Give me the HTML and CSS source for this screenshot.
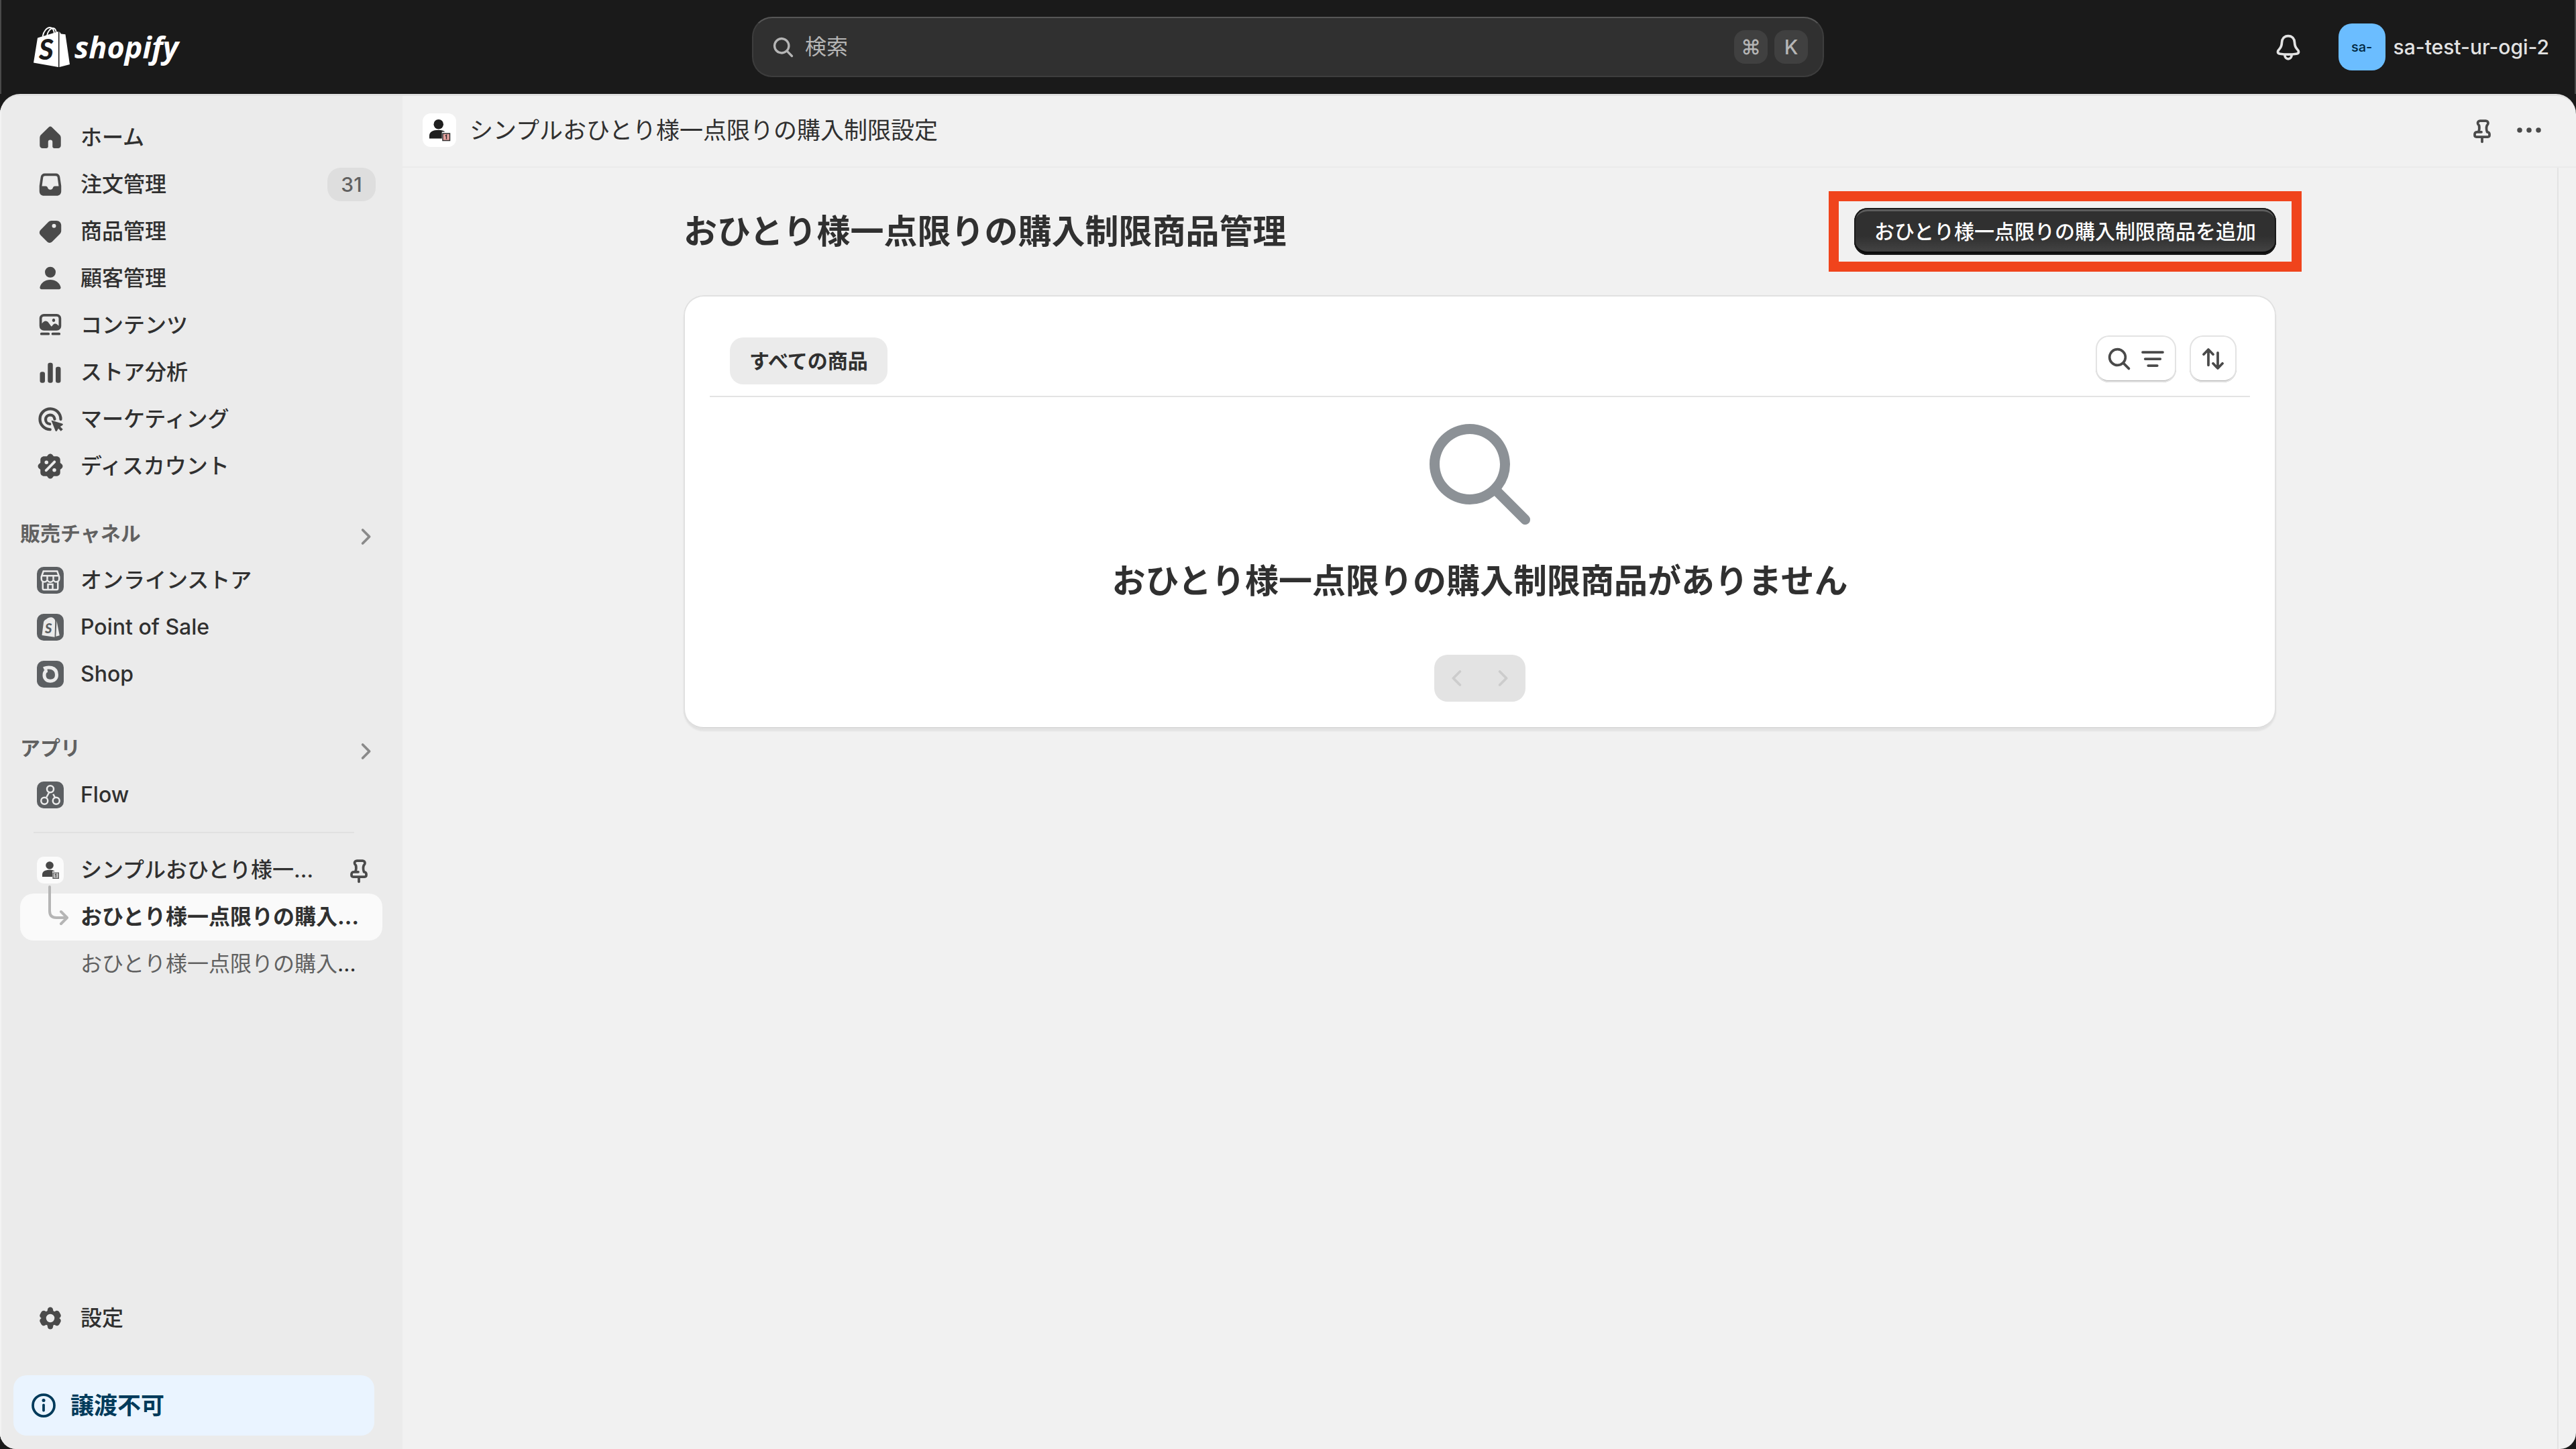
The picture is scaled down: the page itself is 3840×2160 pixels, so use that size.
FILE: index.html
```html
<!DOCTYPE html>
<html lang="ja">
<head>
<meta charset="utf-8">
<meta name="viewport" content="width=device-width, initial-scale=1">
<title>シンプルおひとり様一点限りの購入制限設定</title>
<link rel="stylesheet" href="styles.css">
</head>
<body>
<svg class="sprite" aria-hidden="true">
  <symbol id="i-search" viewBox="0 0 20 20"><path fill-rule="evenodd" d="M12.323 13.383a5.5 5.5 0 1 1 1.06-1.06l2.897 2.897a.75.75 0 1 1-1.06 1.06l-2.897-2.897Zm.677-4.383a4 4 0 1 1-8 0 4 4 0 0 1 8 0Z"/></symbol>
  <symbol id="i-chevron" viewBox="0 0 20 20"><path d="M7.72 14.53a.75.75 0 0 1 0-1.06l3.47-3.47-3.47-3.47a.75.75 0 0 1 1.06-1.06l4 4a.75.75 0 0 1 0 1.06l-4 4a.75.75 0 0 1-1.06 0Z"/></symbol>
  <symbol id="i-pin" viewBox="0 0 20 20"><g fill="none" stroke="currentColor" stroke-width="1.5" stroke-linecap="round" stroke-linejoin="round"><path d="M9.6 11.1H7c-.8 0-1.4.6-1.4 1.3v.6c0 .6.4 1 1 1h6.800c.6 0 1-.4 1-1v-.6c0-.7-.6-1.300-1.400-1.300-.5-1.500-.5-2.900-.1-3.900.5-.4.7-.8.7-1.400 0-.8-.6-1.400-1.400-1.400H8.800c-.8 0-1.400.6-1.400 1.400 0 .6.300 1 .800 1.400.3 1.200.2 2.400-.3 3.900"/><path d="M10 14.300v2.600"/></g></symbol>
  <symbol id="i-app" viewBox="0 0 20 20"><circle class="app-ink" cx="9.500" cy="6.500" r="2.900"/><path class="app-ink" d="M4 15v-1.500C4 11 6 9.900 9.500 9.900c1.700 0 3 .3 3.900 1.100h-1.900v4Z"/><path class="app-card" d="M12 12h4.200v4.200H12Z"/><path class="app-one" d="m13.500 13.500.7-.5v2.400"/></symbol>
</svg>

<header class="topbar">
  <a class="brand" href="#" aria-label="shopify">
    <svg class="brand-bag" viewBox="0 0 54 60" aria-hidden="true">
      <path fill="#fff" d="M6 16.500 37 7v53L0 53.500ZM38.500 7l2.500 3.500 6.500.8L54 56l-15.500 4Z"/>
      <path fill="none" stroke="#fff" stroke-width="1.800" d="M13.500 14.500C15 6 20 1 24.500 1c4 0 6 4.500 6.500 9.500M20 13c1.500-7 5.500-11 9-11 3 0 4.500 3 5 7"/>
      <text class="bag-s" x="19" y="49" text-anchor="middle">S</text>
    </svg>
    <span class="brand-name">shopify</span>
  </a>
  <label class="search">
    <svg class="icon search-icon" aria-hidden="true"><use href="#i-search"/></svg>
    <input type="search" placeholder="検索" aria-label="検索">
    <kbd>⌘</kbd><kbd>K</kbd>
  </label>
  <div class="account">
    <button class="icon-btn bell" type="button" aria-label="通知">
      <svg class="icon" viewBox="0 0 20 20" aria-hidden="true"><g fill="none" stroke="currentColor" stroke-width="1.500" stroke-linejoin="round"><path d="M10 3.400c-2.300 0-3.700 1.700-3.800 3.900-.1 2-.5 3-1.500 4-.5.500-.9 1-.9 1.600 0 .7.500 1.100 1.300 1.200 3.200.5 6.600.5 9.800 0 .8-.1 1.300-.5 1.300-1.200 0-.6-.4-1.100-.9-1.600-1-1-1.400-2-1.500-4-.1-2.200-1.500-3.900-3.800-3.900Z"/><path d="M8 14.500v.6a2 2 0 0 0 4 0v-.6"/></g></svg>
    </button>
    <button class="store" type="button"><span class="avatar">sa-</span>sa-test-ur-ogi-2</button>
  </div>
</header>

<div class="frame">
  <nav class="sidebar" aria-label="メイン">
    <ul class="list">
      <li><a class="item" href="#"><svg class="icon" viewBox="0 0 20 20"><path d="M11 3.900a1.400 1.400 0 0 0-2 0L4.300 8.500C3.900 9 3.700 9.600 3.700 10.300v4.400c0 1 .7 1.700 1.700 1.700h2.200c.6 0 1.100-.4 1.100-1v-2.700a1.300 1.300 0 0 1 2.600 0v2.700c0 .6.500 1 1.100 1h2.200c1 0 1.700-.7 1.700-1.700v-4.400c0-.7-.2-1.300-.6-1.800Z"/></svg><span>ホーム</span></a></li>
      <li><a class="item" href="#"><svg class="icon" viewBox="0 0 20 20"><path fill-rule="evenodd" d="M6.700 3.400h6.600c1.300 0 2.200.8 2.400 2l.8 5.400v3.200c0 1.700-1.100 2.700-2.700 2.700H6.200c-1.600 0-2.700-1-2.700-2.700v-3.200l.8-5.400c.2-1.200 1.100-2 2.400-2Zm.2 1.500c-.7 0-1.100.3-1.200 1L5 11h2.300c.5 0 .9.300 1.100.8.200.9.900 1.300 1.600 1.300s1.400-.4 1.600-1.300c.2-.5.6-.8 1.100-.8H15l-.7-5.100c-.1-.7-.5-1-1.200-1Z"/></svg><span>注文管理</span><span class="badge">31</span></a></li>
      <li><a class="item" href="#"><svg class="icon" viewBox="0 0 20 20"><path fill-rule="evenodd" d="M10.700 3.600h3c1.600 0 2.800 1.200 2.800 2.800v3.200c0 .7-.3 1.400-.8 1.900l-4.600 4.600c-.9.900-2.200.9-3 0L4.200 12.200c-.9-.9-.9-2.200 0-3.100l4.600-4.700c.5-.5 1.200-.8 1.900-.8Zm1.500 4.300a1.200 1.200 0 1 0 0-2.400 1.200 1.200 0 0 0 0 2.400Z"/></svg><span>商品管理</span></a></li>
      <li><a class="item" href="#"><svg class="icon" viewBox="0 0 20 20"><circle cx="10" cy="6.300" r="3.200"/><path d="M3.800 15.200C4.400 12.600 7 10.800 10 10.800s5.600 1.800 6.200 4.400c.2.700-.3 1.300-1 1.300H4.800c-.7 0-1.200-.6-1-1.300Z"/></svg><span>顧客管理</span></a></li>
      <li><a class="item" href="#"><svg class="icon" viewBox="0 0 20 20"><path fill-rule="evenodd" d="M6.200 3.200h7.600c1.500 0 2.700 1.200 2.700 2.700v4.500c0 1.500-1.200 2.700-2.700 2.700H6.200a2.700 2.700 0 0 1-2.700-2.700V5.900c0-1.500 1.200-2.700 2.700-2.700Zm0 1.500C5.500 4.700 5 5.200 5 5.900v3c.7-.9 1.500-1.500 2.200-1.500.8 0 1.300.4 1.800 1.100l1.400 1.900c.2.300.4.300.6 0l.6-.7c.6-.8 1.800-.9 2.500-.2l.9.800V5.900c0-.7-.5-1.200-1.200-1.200Zm5.500 3.200a.9 1 0 1 0 0-1.900.9 1 0 0 0 0 1.900ZM4.700 14.300h4.200a.75.75 0 0 1 0 1.500H4.700a.75.75 0 0 1 0-1.500Zm6.700 0h3.900a.75.75 0 0 1 0 1.500h-3.900a.75.75 0 0 1 0-1.500Z"/></svg><span>コンテンツ</span></a></li>
      <li><a class="item" href="#"><svg class="icon" viewBox="0 0 20 20"><rect x="3.800" y="9.700" width="3" height="6.600" rx="1.300"/><rect x="8.500" y="4.300" width="3" height="12" rx="1.300"/><rect x="13.200" y="6.700" width="3" height="9.600" rx="1.300"/></svg><span>ストア分析</span></a></li>
      <li><a class="item" href="#"><svg class="icon" viewBox="0 0 20 20"><g fill="none" stroke="currentColor" stroke-width="1.700" stroke-linecap="round"><path d="M9.900 16.100A6.200 6.200 0 1 1 16.200 10"/><path d="M9.700 12.800A2.700 2.700 0 1 1 12.600 9.900"/></g><path d="m10.900 10.700 6.200 1.900c.6.200.6.700.1 1l-1.300.8 1.600 1.600-1.200 1.100-1.500-1.600-.8 1.400c-.3.500-.8.400-1-.1l-2.300-5.800c-.1-.3 0-.4.200-.3Z"/></svg><span>マーケティング</span></a></li>
      <li><a class="item" href="#"><svg class="icon" viewBox="0 0 20 20"><path fill-rule="evenodd" d="M8.700 3.200c.7-.8 1.900-.8 2.600 0l.7.900h1.700c1.300 0 2.200.9 2.200 2.200v1.700l.9.700c.8.700.8 1.900 0 2.600l-.9.700v1.700c0 1.300-.9 2.200-2.200 2.200H12l-.7.900c-.7.800-1.900.8-2.600 0l-.7-.9H6.300c-1.300 0-2.200-.9-2.200-2.200V12l-.9-.7c-.8-.7-.8-1.900 0-2.600l.9-.7V6.300c0-1.300.9-2.200 2.200-2.200H8ZM7.700 8.800a1.100 1.100 0 1 0 0-2.200 1.100 1.100 0 0 0 0 2.200Zm4.700 4.600a1.100 1.100 0 1 0 0-2.200 1.100 1.100 0 0 0 0 2.200ZM13.100 7.900 8 13.100c-.7.600-1.700-.4-1.100-1.100L12 6.800c.7-.6 1.700.4 1.100 1.100Z"/></svg><span>ディスカウント</span></a></li>
    </ul>

    <section>
      <a class="section-head" href="#"><span>販売チャネル</span><svg class="icon"><use href="#i-chevron"/></svg></a>
      <ul class="list">
        <li><a class="item" href="#"><svg class="icon tile" viewBox="0 0 16 16"><rect width="16" height="16" rx="4"/><g class="tile-line"><path d="M3.900 2.600h8.200l1.200 3.300v1.200a1.700 1.700 0 0 1-3.500.2 1.800 1.800 0 0 1-3.600 0 1.700 1.700 0 0 1-3.500-.2V5.900ZM2.900 5.300h10.200M6.200 5.500v1.700M9.800 5.500v1.700M3.500 8.800v4.100c0 .4.300.7.700.7h7.600c.4 0 .7-.3.700-.7V8.800M6.600 13.400v-3h2.800v3"/></g></svg><span>オンラインストア</span></a></li>
        <li><a class="item" href="#"><svg class="icon tile" viewBox="0 0 16 16"><rect width="16" height="16" rx="4"/><path class="tile-fill" d="M4 5c.2-.9.700-1.300 1.500-1.700C6.600 2.300 8 1.800 9.200 2.200c1 .4 1.700 1.200 1.700 2.300l-.3 9.400-7.600-1.100ZM11.800 4.200l1.700 8.700-2.200.6Z"/><text class="tile-s" x="6.900" y="11.700" text-anchor="middle">S</text></svg><span>Point of Sale</span></a></li>
        <li><a class="item" href="#"><svg class="icon tile" viewBox="0 0 16 16"><rect width="16" height="16" rx="4"/><path class="tile-shop" d="M4 4.600C5.800 3.900 7.400 3.800 8.800 4.200c2 .6 3 2.200 3 4.200 0 2.300-1.600 3.700-3.800 3.700s-3.600-1.500-3.600-3.500c0-1.500.7-2.600 1.900-2.800"/></svg><span>Shop</span></a></li>
      </ul>
    </section>

    <section class="apps">
      <a class="section-head" href="#"><span>アプリ</span><svg class="icon"><use href="#i-chevron"/></svg></a>
      <ul class="list">
        <li><a class="item" href="#"><svg class="icon tile" viewBox="0 0 16 16"><rect width="16" height="16" rx="4"/><g class="tile-line"><circle cx="8" cy="4.500" r="2"/><circle cx="4.500" cy="11.500" r="2"/><circle cx="11.500" cy="11.500" r="2"/><path d="M7.300 6.500 5.700 9.400M9.700 7.500l1 1.900"/></g></svg><span>Flow</span></a></li>
      </ul>
      <hr class="rule">
      <ul class="list">
        <li><a class="item" href="#"><svg class="icon tile app muted"><use href="#i-app"/></svg><span class="clip">シンプルおひとり様一点限りの購入制限設定</span><svg class="icon pin"><use href="#i-pin"/></svg></a></li>
        <li><a class="item current" href="#" aria-current="page"><svg class="branch" viewBox="0 0 32 60"><path d="M4 2v36q0 10 10 10h14M21 39l9 9-9 9"/></svg><span class="clip">おひとり様一点限りの購入制限商品管理</span></a></li>
        <li><a class="item sub" href="#"><span class="clip"><span class="dim">おひとり様一点限りの購入制限設定</span></span></a></li>
      </ul>
    </section>

    <div class="side-foot">
      <a class="item" href="#"><svg class="icon" viewBox="0 0 20 20"><path fill-rule="evenodd" d="M8.400 4.700c.1-.8.800-1.300 1.600-1.300s1.500.5 1.600 1.300l.1.700c.1.500.6.700 1.100.5l.6-.3c.7-.3 1.500 0 2 .8l.7 1.300c.4.700.2 1.500-.4 2l-.4.300 0 0 .4.300c.6.500.8 1.300.4 2l-.7 1.300c-.5.800-1.300 1.100-2 .8l-.6-.3c-.5-.2-1 0-1.100.5l-.1.700c-.1.800-.8 1.300-1.600 1.300s-1.500-.5-1.600-1.300l-.1-.7c-.1-.5-.6-.7-1.100-.5l-.6.300c-.7.300-1.500 0-2-.8l-.7-1.300c-.4-.7-.2-1.500.4-2l.4-.3 0 0-.4-.3c-.6-.5-.8-1.300-.4-2l.7-1.300c.5-.8 1.300-1.100 2-.8l.6.300c.5.200 1 0 1.100-.5ZM10 12.500a2.500 2.500 0 1 0 0-5 2.500 2.500 0 0 0 0 5Z"/></svg><span>設定</span></a>
      <a class="notice" href="#"><svg class="icon" viewBox="0 0 20 20"><circle cx="10" cy="10" r="6.400" fill="none" stroke="currentColor" stroke-width="1.500"/><circle cx="10" cy="7" r="1"/><path d="M10 9.700v3.300" stroke="currentColor" stroke-width="1.500" stroke-linecap="round"/></svg><span>譲渡不可</span></a>
    </div>
  </nav>

  <div class="page">
    <div class="page-bar">
      <svg class="icon app"><use href="#i-app"/></svg>
      <span class="page-name">シンプルおひとり様一点限りの購入制限設定</span>
      <button class="icon-btn" type="button" aria-label="固定"><svg class="icon"><use href="#i-pin"/></svg></button>
      <button class="icon-btn" type="button" aria-label="その他"><svg class="icon" viewBox="0 0 20 20"><circle cx="4.400" cy="10" r="1.500"/><circle cx="10" cy="10" r="1.500"/><circle cx="15.600" cy="10" r="1.500"/></svg></button>
    </div>
    <main class="main">
      <div class="content">
        <div class="title-row">
          <h1>おひとり様一点限りの購入制限商品管理</h1>
          <div class="marked"><button class="primary" type="button">おひとり様一点限りの購入制限商品を追加</button></div>
        </div>
        <section class="card">
          <div class="toolbar">
            <button class="tab" type="button">すべての商品</button>
            <div class="tools">
              <button class="tool" type="button" aria-label="検索と絞り込み"><svg class="icon"><use href="#i-search"/></svg><svg class="icon" viewBox="0 0 20 20"><g stroke="currentColor" stroke-width="1.500" stroke-linecap="round"><path d="M4 6h12M5.500 10h9M7.300 14h5.400"/></g></svg></button>
              <button class="tool" type="button" aria-label="並べ替え"><svg class="icon" viewBox="0 0 20 20"><g fill="none" stroke="currentColor" stroke-width="1.500" stroke-linecap="round" stroke-linejoin="round"><path d="M7.200 13.700V4.500M4.400 7.300l2.800-2.900 2.800 2.900M12.800 6.300v9.200M10 12.700l2.800 2.900 2.800-2.900"/></g></svg></button>
            </div>
          </div>
          <div class="empty">
            <svg class="empty-icon" viewBox="0 0 20 20" aria-hidden="true"><path d="M2 8c0-3.309 2.691-6 6-6s6 2.691 6 6-2.691 6-6 6-6-2.691-6-6zm17.707 10.293l-5.395-5.396A7.946 7.946 0 0 0 16 8c0-4.411-3.589-8-8-8S0 3.589 0 8s3.589 8 8 8a7.954 7.954 0 0 0 4.897-1.688l5.396 5.395A.998.998 0 0 0 20 19a1 1 0 0 0-.293-.707z"/></svg>
            <h2>おひとり様一点限りの購入制限商品がありません</h2>
            <div class="pager">
              <button type="button" disabled aria-label="前へ"><svg class="icon flip"><use href="#i-chevron"/></svg></button>
              <button type="button" disabled aria-label="次へ"><svg class="icon"><use href="#i-chevron"/></svg></button>
            </div>
          </div>
        </section>
      </div>
    </main>
  </div>
</div>
</body>
</html>
```
FILE: styles.css
```css
* { box-sizing: border-box; }

body {
  margin: 0;
  min-height: 100vh;
  display: flex;
  flex-direction: column;
  background: #1a1a1a;
  color: #303030;
  font-family: Inter, "Noto Sans CJK JP", sans-serif;
  font-size: 32px;
  line-height: 50px;
  font-weight: 500;
}

h1, h2, ul { margin: 0; padding: 0; }
a { color: inherit; text-decoration: none; }
button, input { font: inherit; color: inherit; border: 0; padding: 0; background: none; }

.sprite { display: none; }
.icon { width: 50px; height: 50px; flex: none; display: block; fill: currentColor; }

/* Top bar */
.topbar {
  display: grid;
  grid-template-columns: 1fr minmax(0, 1598px) 1fr;
  align-items: center;
  height: 140px;
  padding: 0 38px;
  border: solid #4a4a4a;
  border-width: 0 2px;
}
.brand { display: flex; align-items: center; gap: 7px; padding-left: 10px; color: #fff; }
.brand-bag { width: 54px; height: 60px; }
.bag-s { font: italic 900 42px Lato, sans-serif; fill: #1a1a1a; }
.brand-name { font: italic 700 45px/60px "Open Sans", sans-serif; }
.search {
  display: flex;
  align-items: center;
  gap: 10px;
  height: 90px;
  padding: 0 22px;
  border: 2px solid #3d3d3d;
  border-top-color: #565656;
  border-radius: 30px;
  background: #303030;
  color: #b5b5b5;
}
.search .search-icon { width: 45px; height: 45px; }
.search input {
  flex: 1;
  min-width: 0;
  height: 50px;
  font-weight: 400;
  outline: 0;
}
.search input::placeholder { color: #b5b5b5; opacity: 1; }
kbd {
  width: 50px;
  height: 50px;
  border-radius: 16px;
  background: #404040;
  font: 500 30px/50px Inter, "DejaVu Sans", sans-serif;
  text-align: center;
}
.account { display: flex; justify-content: flex-end; align-items: center; gap: 50px; color: #e3e3e3; }
.icon-btn { display: block; }
.store { display: flex; align-items: center; gap: 12px; font-size: 30px; }
.avatar {
  width: 70px;
  height: 70px;
  border-radius: 20px;
  background: #6bbdff;
  color: #00283f;
  font-size: 20px;
  line-height: 70px;
}

/* Frame */
.frame {
  flex: 1;
  display: flex;
  border-top: 3px solid #e1e1e1;
  border-radius: 30px 30px 24px 24px;
  background: #f1f1f1;
  overflow: hidden;
}

/* Sidebar */
.sidebar {
  flex: none;
  width: 600px;
  display: flex;
  flex-direction: column;
  padding: 27px 30px 20px 28px;
  border-left: 2px solid #f3f3f3;
  background: #ebebeb;
}
.list { list-style: none; }
.item {
  display: flex;
  align-items: center;
  gap: 20px;
  height: 70px;
  padding: 0 10px 0 20px;
  border-radius: 20px;
  white-space: nowrap;
}
.item > .icon { color: #4a4a4a; }
.badge {
  margin-left: auto;
  min-width: 72px;
  border-radius: 20px;
  background: #dedede;
  color: #616161;
  font-size: 30px;
  text-align: center;
}
.section-head {
  display: flex;
  justify-content: space-between;
  align-items: flex-start;
  height: 60px;
  margin-top: 40px;
  color: #616161;
  font-size: 30px;
  font-weight: 600;
}
.section-head .icon { align-self: center; color: #8a8a8a; }
.apps .section-head { margin-top: 50px; }
.item > .tile { width: 40px; height: 40px; margin: 0 5px; color: #5c5f62; }
.tile-line { fill: none; stroke: #ebebeb; stroke-width: 1; }
.tile-fill { fill: #ebebeb; }
.tile-s { font: italic 900 8px Lato, sans-serif; fill: #5c5f62; }
.tile-shop { fill: none; stroke: #ebebeb; stroke-width: 2; }
.rule { height: 2px; margin: 20px 42px 20px 20px; border: 0; background: #e1e1e1; }

.app { border-radius: 12px; background: #fff; }
.app-ink { fill: #1f1f1f; }
.app-card { fill: #e8a3a0; stroke: #303030; stroke-width: .6; }
.app-one { fill: none; stroke: #303030; stroke-width: .6; }
.muted { filter: grayscale(1); opacity: .8; border-radius: 10px; }

.clip { flex: 1; min-width: 0; overflow: hidden; text-overflow: ellipsis; }
.item > .pin { margin-left: 10px; }
.current, .sub { position: relative; padding: 0 20px 0 90px; }
.current { background: #fafafa; font-weight: 700; }
.sub { font-weight: 400; }
.dim { color: #616161; }
.branch {
  position: absolute;
  left: 40px;
  top: -12px;
  width: 32px;
  height: 60px;
  fill: none;
  stroke: #b5b5b5;
  stroke-width: 4;
  stroke-linecap: round;
  stroke-linejoin: round;
}
.side-foot { margin-top: auto; display: flex; flex-direction: column; gap: 50px; }
.notice {
  display: flex;
  align-items: center;
  gap: 15px;
  height: 90px;
  margin: 0 12px 0 -10px;
  padding: 0 20px;
  border-radius: 20px;
  background: #eaf4ff;
  color: #003a5a;
  font-size: 35px;
  font-weight: 700;
}

/* Page */
.page { flex: 1; min-width: 0; display: flex; flex-direction: column; }
.page-bar {
  display: flex;
  align-items: center;
  gap: 20px;
  height: 107px;
  padding: 0 45px 3px 30px;
  border-bottom: 2px solid #ebebeb;
  font-size: 35px;
  font-weight: 400;
}
.page-name { flex: 1; }
.page-bar .icon-btn { color: #4a4a4a; }
.main {
  flex: 1;
  margin-right: 26px;
  padding: 60px 40px;
  border-right: 2px solid #e3e3e3;
}
.content { max-width: 2374px; margin: 0 auto; }
.title-row { display: flex; justify-content: space-between; align-items: center; margin-bottom: 60px; }
h1, h2 { font-size: 50px; line-height: 60px; font-weight: 700; }

.marked { position: relative; }
.marked::after {
  content: "";
  position: absolute;
  inset: -25px -38px;
  border: 15px solid #f0441c;
  pointer-events: none;
}
.primary {
  display: block;
  height: 70px;
  padding: 0 30px;
  border-radius: 20px;
  background: linear-gradient(#303030 60%, #474747);
  box-shadow: inset 0 0 0 2px #1a1a1a, inset 0 5px 0 #5c5c5c, inset 0 -5px 0 #0d0d0d;
  color: #fff;
  font-size: 30px;
}

.card {
  padding: 60px 39px 41px;
  border-radius: 30px;
  background: #fff;
  box-shadow: inset 0 0 0 2px #e1e1e1, inset 0 -3px 0 #cfcfcf, 0 3px 2px #e3e3e3;
}
.toolbar {
  display: flex;
  justify-content: space-between;
  align-items: flex-end;
  padding: 0 20px 17px 30px;
  border-bottom: 2px solid #e3e3e3;
}
.tab {
  height: 70px;
  padding: 0 29px;
  border-radius: 20px;
  background: #ebebeb;
  font-size: 30px;
  font-weight: 700;
}
.tools { display: flex; gap: 20px; padding-bottom: 3px; }
.tool {
  display: flex;
  align-items: center;
  justify-content: center;
  height: 70px;
  padding: 0 10px;
  border-radius: 20px;
  color: #4a4a4a;
  background: #fff;
  box-shadow: inset 0 0 0 2px #e3e3e3, inset 0 -3px 0 #b5b5b5;
}
.empty { display: flex; flex-direction: column; align-items: center; padding-top: 40px; }
.empty-icon { width: 150px; height: 150px; fill: #8c9196; }
.empty h2 { margin: 54px 0 80px; }
.pager { display: flex; border-radius: 20px; overflow: hidden; background: #e3e3e3; }
.pager button { padding: 10px 9px; color: #cccccc; }
.flip { transform: scaleX(-1); }
```
